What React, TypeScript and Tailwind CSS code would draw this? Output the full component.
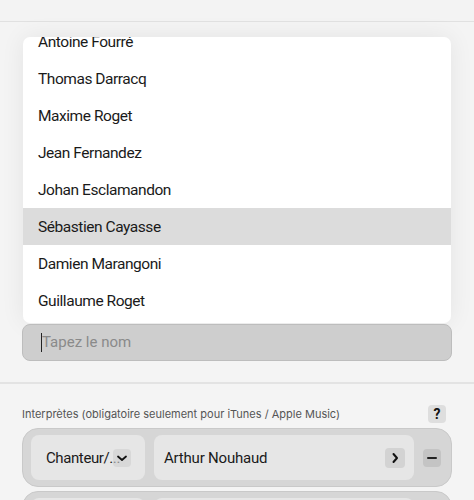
import React from "react";

const names = [
  "Antoine Fourré",
  "Thomas Darracq",
  "Maxime Roget",
  "Jean Fernandez",
  "Johan Esclamandon",
  "Sébastien Cayasse",
  "Damien Marangoni",
  "Guillaume Roget",
];

const ChevronDown = () => (
  <svg width="12" height="12" viewBox="0 0 12 12" fill="none">
    <path d="M2 4.5l4 3.5 4-3.5" stroke="#111" strokeWidth="1.8" strokeLinecap="round" strokeLinejoin="round" />
  </svg>
);

const ChevronRight = () => (
  <svg width="12" height="12" viewBox="0 0 12 12" fill="none">
    <path d="M4.5 2l3.5 4-3.5 4" stroke="#111" strokeWidth="2" strokeLinecap="round" strokeLinejoin="round" />
  </svg>
);

function PerformerRow({ role, name }: { role: string; name: string }) {
  return (
    <div className="flex items-center h-[59px] rounded-[16px] bg-[#d6d6d6] border border-[#c9c9c9] pl-[8px] pr-[10px] gap-[9px]">
      <div className="relative flex items-center w-[114px] h-[45px] rounded-[8px] bg-[#e6e6e6] pl-[15px] pt-[2px]">
        <span className="text-[15px] tracking-[-0.4px] text-[#1a1a1a] whitespace-nowrap">{role}</span>
        <span className="absolute left-[82px] top-[14px] flex items-center justify-center w-[18px] h-[18px] rounded-[4px] bg-[#cfcfcf]/60">
          <ChevronDown />
        </span>
      </div>
      <div className="flex items-center flex-1 h-[45px] rounded-[8px] bg-[#e6e6e6] pl-[10px] pr-[9px]">
        <span className="flex-1 pt-[2px] text-[15px] tracking-[-0.2px] text-[#1a1a1a]">{name}</span>
        <span className="flex items-center justify-center w-[20px] h-[20px] rounded-[4px] bg-[#d3d3d3]">
          <ChevronRight />
        </span>
      </div>
      <button className="flex items-center justify-center w-[18px] h-[18px] rounded-[4px] bg-[#c4c4c4]">
        <span className="block w-[10px] h-[2px] bg-[#222] rounded" />
      </button>
    </div>
  );
}

export default function App() {
  return (
    <div
      className="h-[500px] overflow-hidden bg-[#f4f4f4]"
      style={{ fontFamily: "Roboto, 'Noto Sans', sans-serif" }}
    >
      <div className="h-[22px] bg-[#f3f3f3] border-b border-[#e1e1e1]" />

      <div className="px-[22px] pt-[15px]">
        <div className="mx-[1px] h-[286px] overflow-hidden rounded-[7px] bg-white shadow-[0_0_24px_rgba(0,0,0,0.07)]">
          <ul className="-mt-[14px]">
            {names.map((n) => (
              <li
                key={n}
                className={`flex items-center h-[37px] pl-[15px] pt-[3px] text-[15.5px] tracking-[-0.45px] text-[#1a1a1a] ${
                  n === "Sébastien Cayasse" ? "bg-[#dcdcdc]" : ""
                }`}
              >
                {n}
              </li>
            ))}
          </ul>
        </div>

        <div className="mt-[1px] flex items-center h-[37px] rounded-[8px] bg-[#cecece] border border-[#bdbdbd] pl-[18px]">
          <span className="w-[1px] h-[19px] bg-[#222]" />
          <span className="text-[15px] text-[#8a8a8a]">Tapez le nom</span>
        </div>
      </div>

      <div className="mt-[21px] border-t-2 border-[#e3e3e3]" />

      <div className="px-[22px] pt-[21px]">
        <div className="flex items-center justify-between pr-[6px]">
          <span
            className="text-[11px] text-[#555]"
            style={{ fontFamily: "Inter, 'Noto Sans', sans-serif" }}
          >
            Interprètes (obligatoire seulement pour iTunes / Apple Music)
          </span>
          <span className="flex items-center justify-center w-[18px] h-[18px] rounded-[4px] bg-[#dedede] text-[14px] font-bold text-[#111]">
            ?
          </span>
        </div>

        <div className="mt-[5px] flex flex-col gap-[4px]">
          <PerformerRow role="Chanteur/..." name="Arthur Nouhaud" />
          <PerformerRow role="Chanteur/..." name="" />
        </div>
      </div>
    </div>
  );
}
